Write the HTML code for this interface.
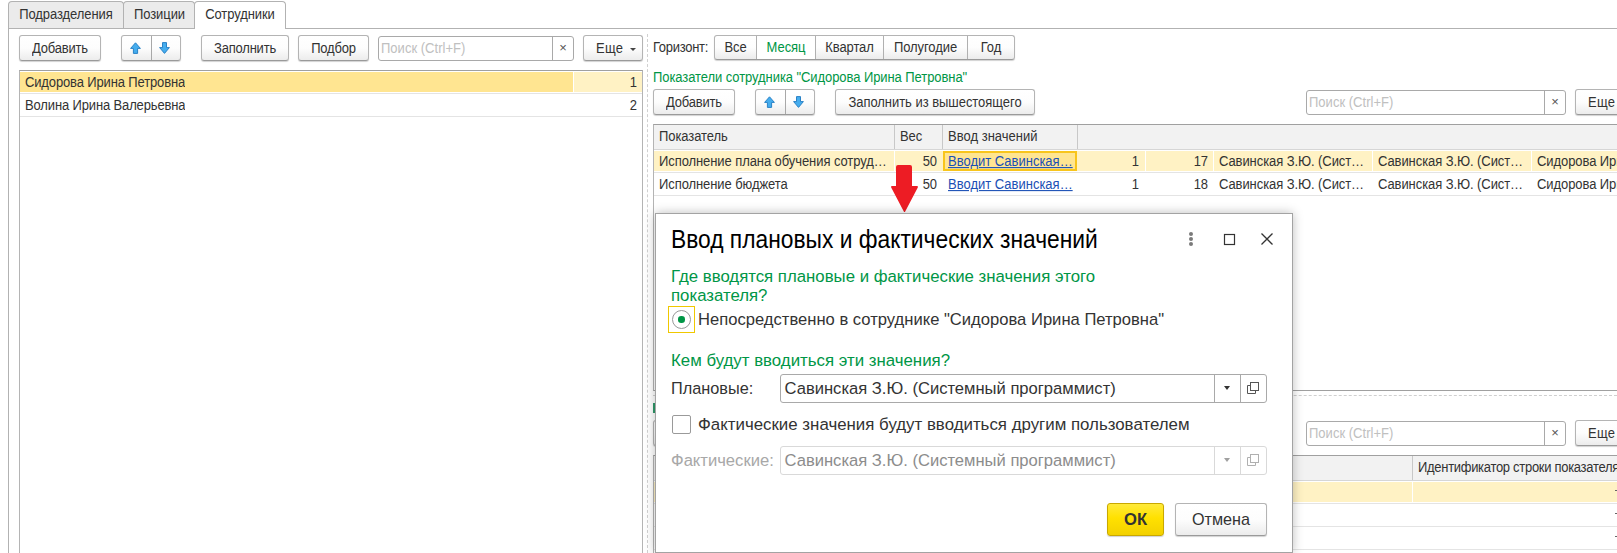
<!DOCTYPE html>
<html lang="ru">
<head>
<meta charset="utf-8">
<title>Ввод плановых и фактических значений</title>
<style>
html,body{margin:0;padding:0;}
body{width:1617px;height:553px;overflow:hidden;background:#fff;position:relative;font-family:"Liberation Sans",sans-serif;font-size:13px;color:#333;letter-spacing:-0.08px;}
.a{position:absolute;white-space:nowrap;box-sizing:border-box;}
.btn{position:absolute;box-sizing:border-box;border:1px solid #b4b4b4;border-bottom-color:#9a9a9a;border-radius:3px;background:linear-gradient(#ffffff 0%,#fdfdfd 50%,#ececec 100%);box-shadow:0 1px 1px rgba(0,0,0,.18);text-align:center;white-space:nowrap;color:#333;height:26px;line-height:25px;font-size:13px;letter-spacing:-0.2px;}
.tab{position:absolute;box-sizing:border-box;border:1px solid #b2b2b2;border-bottom:none;border-radius:4px 4px 0 0;background:#ebebeb;text-align:center;line-height:24px;color:#333;}
.inp{position:absolute;box-sizing:border-box;border:1px solid #a9a9a9;border-radius:3px;background:#fff;}
.ph{color:#c0c0c0;letter-spacing:0.02px;}
.hl{position:absolute;height:1px;background:#e4e4e4;}
.vl{position:absolute;width:1px;background:#c8c8c8;}
.g{color:#009646;}
.cell{position:absolute;white-space:nowrap;line-height:22px;height:22px;overflow:hidden;}
.r{text-align:right;}
.lnk{color:#1a4fb5;letter-spacing:0;}
.lnk .t{text-decoration:underline;}
.d{font-size:16.6px;letter-spacing:0;}
.t{display:inline-block;transform:scaleY(1.075);transform-origin:50% 70%;}
</style>
</head>
<body>

<!-- outer frame lines -->

<!-- tabs -->
<div class="tab" style="left:8px;top:1px;width:116px;height:27px;line-height:25px;"><span class="t">Подразделения</span></div>
<div class="tab" style="left:123px;top:1px;width:72px;height:27px;line-height:25px;padding-left:1px;"><span class="t">Позиции</span></div>
<div class="a" style="left:8px;top:28px;width:1609px;height:1px;background:#b2b2b2;"></div>
<div class="a" style="left:8px;top:28px;width:1px;height:525px;background:#b2b2b2;"></div>
<div class="tab" style="left:194px;top:1px;width:92px;height:28px;background:#fff;line-height:25px;"><span class="t">Сотрудники</span></div>

<!-- left toolbar -->
<div class="btn" style="left:19px;top:35px;width:82px;"><span class="t">Добавить</span></div>
<div class="btn" style="left:121px;top:35px;width:60px;"></div>
<div class="a" style="left:151px;top:36px;width:1px;height:24px;background:#a8a8a8;"></div>
<svg class="a" style="left:129px;top:42px;" width="13" height="13" viewBox="0 0 13 13"><path d="M6.5 0.8 L11.4 6.4 H8.6 V11.4 H4.4 V6.4 H1.6 Z" fill="#45adee" stroke="#2a82c6" stroke-width="1" stroke-linejoin="miter"/></svg>
<svg class="a" style="left:158px;top:42px;" width="13" height="13" viewBox="0 0 13 13"><path d="M6.5 11.4 L11.4 5.6 H8.5 V0.6 H4.5 V5.6 H1.6 Z" fill="#45adee" stroke="#2a82c6" stroke-width="1" stroke-linejoin="miter"/></svg>
<div class="btn" style="left:201px;top:35px;width:88px;"><span class="t">Заполнить</span></div>
<div class="btn" style="left:298px;top:35px;width:71px;"><span class="t">Подбор</span></div>
<div class="inp" style="left:378px;top:36px;width:196px;height:25px;"></div>
<div class="a ph" style="left:381px;top:36px;line-height:25px;"><span class="t">Поиск (Ctrl+F)</span></div>
<div class="a" style="left:552px;top:37px;width:1px;height:23px;background:#a9a9a9;"></div>
<div class="a" style="left:553px;top:36px;width:20px;line-height:24px;text-align:center;color:#555;font-size:13px;">×</div>
<div class="btn" style="left:583px;top:35px;width:60px;text-align:left;padding-left:12px;letter-spacing:0.25px;"><span class="t">Еще</span></div>
<div class="a" style="left:630px;top:48px;width:0;height:0;border-left:3px solid transparent;border-right:3px solid transparent;border-top:3px solid #444;"></div>

<!-- left list -->
<div class="a" style="left:19px;top:70px;width:624px;height:483px;border:1px solid #a0a0a0;border-bottom:none;border-left-color:#b4b4b4;border-right-color:#b4b4b4;"></div>
<div class="a" style="left:20px;top:72px;width:553px;height:20px;background:#ffe591;"></div>
<div class="a" style="left:574px;top:72px;width:68px;height:20px;background:#fff2c4;"></div>
<div class="hl" style="left:20px;top:93px;width:622px;"></div>
<div class="hl" style="left:20px;top:116px;width:622px;"></div>
<div class="cell" style="left:25px;top:72px;letter-spacing:-0.14px;"><span class="t">Сидорова Ирина Петровна</span></div>
<div class="cell r" style="left:574px;top:72px;width:63px;"><span class="t">1</span></div>
<div class="cell" style="left:25px;top:95px;letter-spacing:-0.14px;"><span class="t">Волина Ирина Валерьевна</span></div>
<div class="cell r" style="left:574px;top:95px;width:63px;"><span class="t">2</span></div>

<!-- splitter -->
<div class="a" style="left:647px;top:34px;width:0;height:519px;border-left:1px dashed #d0d0d0;"></div>

<!-- right top: horizon -->
<div class="a" style="left:653px;top:35px;line-height:26px;letter-spacing:-0.3px;"><span class="t">Горизонт:</span></div>
<div class="btn" style="left:714px;top:35px;width:301px;height:25px;"></div>
<div class="a" style="left:757px;top:36px;width:59px;height:23px;background:#fff;"></div>
<div class="a" style="left:756px;top:36px;width:1px;height:23px;background:#b0b0b0;"></div>
<div class="a" style="left:815px;top:36px;width:1px;height:23px;background:#b0b0b0;"></div>
<div class="a" style="left:883px;top:36px;width:1px;height:23px;background:#b0b0b0;"></div>
<div class="a" style="left:967px;top:36px;width:1px;height:23px;background:#b0b0b0;"></div>
<div class="a" style="left:714px;top:35px;width:43px;text-align:center;line-height:26px;"><span class="t">Все</span></div>
<div class="a g" style="left:757px;top:35px;width:58px;text-align:center;line-height:26px;"><span class="t">Месяц</span></div>
<div class="a" style="left:816px;top:35px;width:67px;text-align:center;line-height:26px;"><span class="t">Квартал</span></div>
<div class="a" style="left:884px;top:35px;width:83px;text-align:center;line-height:26px;"><span class="t">Полугодие</span></div>
<div class="a" style="left:968px;top:35px;width:46px;text-align:center;line-height:26px;"><span class="t">Год</span></div>

<div class="a g" style="left:653px;top:69px;line-height:18px;letter-spacing:-0.075px;"><span class="t">Показатели сотрудника "Сидорова Ирина Петровна"</span></div>

<div class="btn" style="left:653px;top:89px;width:82px;"><span class="t">Добавить</span></div>
<div class="btn" style="left:755px;top:89px;width:60px;"></div>
<div class="a" style="left:785px;top:90px;width:1px;height:24px;background:#a8a8a8;"></div>
<svg class="a" style="left:763px;top:96px;" width="13" height="13" viewBox="0 0 13 13"><path d="M6.5 0.8 L11.4 6.4 H8.6 V11.4 H4.4 V6.4 H1.6 Z" fill="#45adee" stroke="#2a82c6" stroke-width="1" stroke-linejoin="miter"/></svg>
<svg class="a" style="left:792px;top:96px;" width="13" height="13" viewBox="0 0 13 13"><path d="M6.5 11.4 L11.4 5.6 H8.5 V0.6 H4.5 V5.6 H1.6 Z" fill="#45adee" stroke="#2a82c6" stroke-width="1" stroke-linejoin="miter"/></svg>
<div class="btn" style="left:835px;top:89px;width:200px;letter-spacing:-0.04px;"><span class="t">Заполнить из вышестоящего</span></div>
<div class="inp" style="left:1306px;top:90px;width:260px;height:25px;"></div>
<div class="a ph" style="left:1309px;top:90px;line-height:25px;"><span class="t">Поиск (Ctrl+F)</span></div>
<div class="a" style="left:1544px;top:91px;width:1px;height:23px;background:#a9a9a9;"></div>
<div class="a" style="left:1545px;top:90px;width:20px;line-height:24px;text-align:center;color:#555;font-size:13px;">×</div>
<div class="btn" style="left:1575px;top:89px;width:60px;text-align:left;padding-left:12px;letter-spacing:0.25px;"><span class="t">Еще</span></div>

<!-- right top table -->
<div class="a" style="left:653px;top:124px;width:970px;height:267px;border:1px solid #a0a0a0;border-left-color:#b4b4b4;"></div>
<div class="a" style="left:654px;top:125px;width:963px;height:24px;background:#f2f2f2;"></div>
<div class="a" style="left:654px;top:149px;width:963px;height:1px;background:#d6d6d6;"></div>
<div class="vl" style="left:894px;top:125px;height:24px;"></div>
<div class="vl" style="left:942px;top:125px;height:24px;"></div>
<div class="vl" style="left:1077px;top:125px;height:24px;"></div>
<div class="a" style="left:659px;top:125px;line-height:23px;"><span class="t">Показатель</span></div>
<div class="a" style="left:900px;top:125px;line-height:23px;"><span class="t">Вес</span></div>
<div class="a" style="left:948px;top:125px;line-height:23px;letter-spacing:0.02px;"><span class="t">Ввод значений</span></div>

<div class="a" style="left:654px;top:151px;width:963px;height:20px;background:#fff2c4;"></div>
<div class="a" style="left:894px;top:151px;width:1px;height:20px;background:#fff;"></div>
<div class="a" style="left:1145px;top:151px;width:1px;height:20px;background:#fff;"></div>
<div class="a" style="left:1213px;top:151px;width:1px;height:20px;background:#fff;"></div>
<div class="a" style="left:1372px;top:151px;width:1px;height:20px;background:#fff;"></div>
<div class="a" style="left:1531px;top:151px;width:1px;height:20px;background:#fff;"></div>
<div class="a" style="left:943px;top:151px;width:134px;height:20px;background:#ffe591;border:2px solid #f8c51c;"></div>
<div class="hl" style="left:654px;top:172px;width:963px;"></div>
<div class="hl" style="left:654px;top:195px;width:963px;"></div>

<div class="cell" style="left:659px;top:151px;"><span class="t">Исполнение плана обучения сотруд…</span></div>
<div class="cell r" style="left:896px;top:151px;width:41px;"><span class="t">50</span></div>
<div class="cell lnk" style="left:948px;top:151px;"><span class="t">Вводит Савинская…</span></div>
<div class="cell r" style="left:1078px;top:151px;width:61px;"><span class="t">1</span></div>
<div class="cell r" style="left:1146px;top:151px;width:62px;"><span class="t">17</span></div>
<div class="cell" style="left:1219px;top:151px;"><span class="t">Савинская З.Ю. (Сист…</span></div>
<div class="cell" style="left:1378px;top:151px;"><span class="t">Савинская З.Ю. (Сист…</span></div>
<div class="cell" style="left:1537px;top:151px;"><span class="t">Сидорова Ирина Петровна</span></div>

<div class="cell" style="left:659px;top:174px;"><span class="t">Исполнение бюджета</span></div>
<div class="cell r" style="left:896px;top:174px;width:41px;"><span class="t">50</span></div>
<div class="cell lnk" style="left:948px;top:174px;"><span class="t">Вводит Савинская…</span></div>
<div class="cell r" style="left:1078px;top:174px;width:61px;"><span class="t">1</span></div>
<div class="cell r" style="left:1146px;top:174px;width:62px;"><span class="t">18</span></div>
<div class="cell" style="left:1219px;top:174px;"><span class="t">Савинская З.Ю. (Сист…</span></div>
<div class="cell" style="left:1378px;top:174px;"><span class="t">Савинская З.Ю. (Сист…</span></div>
<div class="cell" style="left:1537px;top:174px;"><span class="t">Сидорова Ирина Петровна</span></div>

<!-- right bottom area -->
<div class="a" style="left:653px;top:395px;width:964px;height:0;border-top:1px dashed #d0d0d0;"></div>
<div class="a" style="left:653px;top:403px;width:2px;height:10px;background:#2f9a6a;"></div>
<div class="btn" style="left:653px;top:420px;width:82px;"></div>
<div class="inp" style="left:1306px;top:421px;width:260px;height:25px;"></div>
<div class="a ph" style="left:1309px;top:421px;line-height:25px;"><span class="t">Поиск (Ctrl+F)</span></div>
<div class="a" style="left:1544px;top:422px;width:1px;height:23px;background:#a9a9a9;"></div>
<div class="a" style="left:1545px;top:421px;width:20px;line-height:24px;text-align:center;color:#555;font-size:13px;">×</div>
<div class="btn" style="left:1575px;top:420px;width:60px;text-align:left;padding-left:12px;letter-spacing:0.25px;"><span class="t">Еще</span></div>
<div class="a" style="left:653px;top:455px;width:970px;height:110px;border:1px solid #a0a0a0;border-left-color:#b4b4b4;"></div>
<div class="a" style="left:654px;top:456px;width:963px;height:24px;background:#f2f2f2;"></div>
<div class="a" style="left:654px;top:480px;width:963px;height:1px;background:#d6d6d6;"></div>
<div class="vl" style="left:1412px;top:456px;height:24px;"></div>
<div class="a" style="left:1418px;top:456px;line-height:23px;letter-spacing:-0.3px;"><span class="t">Идентификатор строки показателя</span></div>
<div class="a" style="left:654px;top:482px;width:963px;height:20px;background:#fff2c4;"></div>
<div class="a" style="left:1412px;top:482px;width:1px;height:20px;background:#fff;"></div>
<div class="hl" style="left:654px;top:503px;width:963px;"></div>
<div class="hl" style="left:654px;top:526px;width:963px;"></div>
<div class="hl" style="left:654px;top:549px;width:963px;"></div>
<div class="a" style="left:1615px;top:490px;width:2px;height:1px;background:#666;"></div>
<div class="a" style="left:1615px;top:513px;width:2px;height:1px;background:#666;"></div>
<div class="a" style="left:1615px;top:536px;width:2px;height:1px;background:#666;"></div>

<!-- red arrow -->
<svg class="a" style="left:888px;top:162px;" width="34" height="54" viewBox="0 0 34 54"><path d="M10 3 H22 Q24 3 24 5 V24 H29 Q30.6 24 29.8 25.6 L17.2 49.4 Q16.5 50.6 15.8 49.4 L3.2 25.6 Q2.4 24 4 24 H8 V5 Q8 3 10 3 Z" fill="#ed1c24"/></svg>

<!-- dialog -->
<div class="a" style="left:655px;top:213px;width:638px;height:340px;background:#fff;border:1px solid #a3a3a3;box-shadow:0 0 10px rgba(0,0,0,.26);"></div>
<div class="a" style="left:671px;top:226px;font-size:22.8px;line-height:28px;color:#000;letter-spacing:0;"><span style="display:inline-block;transform:scaleY(1.09);transform-origin:50% 78%;">Ввод плановых и фактических значений</span></div>

<svg class="a" style="left:1186px;top:231px;" width="10" height="17" viewBox="0 0 10 17"><circle cx="5" cy="3" r="2" fill="#7a7a7a"/><circle cx="5" cy="8" r="2" fill="#7a7a7a"/><circle cx="5" cy="13" r="2" fill="#7a7a7a"/></svg>
<svg class="a" style="left:1223px;top:233px;" width="14" height="14" viewBox="0 0 14 14"><rect x="1.5" y="1.5" width="10" height="10" fill="none" stroke="#333" stroke-width="1.2"/></svg>
<svg class="a" style="left:1259px;top:231px;" width="16" height="16" viewBox="0 0 16 16"><path d="M2.5 2.5 L13.5 13.5 M13.5 2.5 L2.5 13.5" stroke="#333" stroke-width="1.3" fill="none"/></svg>

<div class="a g d" style="left:671px;top:267px;line-height:19px;white-space:normal;width:440px;font-size:16.79px;">Где вводятся плановые и фактические значения этого показателя?</div>

<div class="a" style="left:668px;top:306px;width:27px;height:27px;border:1px solid #f0c800;"></div>
<div class="a" style="left:672px;top:310px;width:19px;height:19px;border:1px solid #999;border-radius:50%;background:#fff;"></div>
<div class="a" style="left:678.3px;top:316.3px;width:6.4px;height:6.4px;border-radius:50%;background:#009646;"></div>
<div class="a d" style="left:698px;top:310px;line-height:20px;font-size:16.6px;">Непосредственно в сотруднике "Сидорова Ирина Петровна"</div>

<div class="a g d" style="left:671px;top:351px;line-height:20px;font-size:16.83px;">Кем будут вводиться эти значения?</div>

<div class="a d" style="left:671px;top:378px;line-height:20px;font-size:16.3px;">Плановые:</div>
<div class="inp" style="left:780px;top:374px;width:487px;height:29px;"></div>
<div class="a" style="left:1214px;top:375px;width:1px;height:27px;background:#a9a9a9;"></div>
<div class="a" style="left:1240px;top:375px;width:1px;height:27px;background:#a9a9a9;"></div>
<div class="a d" style="left:784.5px;top:379px;line-height:20px;font-size:16.58px;">Савинская З.Ю. (Системный программист)</div>
<div class="a" style="left:1223.5px;top:386px;width:0;height:0;border-left:3.5px solid transparent;border-right:3.5px solid transparent;border-top:4px solid #333;"></div>
<svg class="a" style="left:1246px;top:381px;" width="14" height="14" viewBox="0 0 14 14"><path d="M4.5 4.5 H1.5 V12.5 H9.5 V9.5" fill="none" stroke="#555" stroke-width="1"/><rect x="4.5" y="1.5" width="8" height="8" fill="#fff" stroke="#555" stroke-width="1"/></svg>

<div class="a" style="left:672px;top:415px;width:19px;height:19px;border:1px solid #9a9a9a;border-radius:2px;background:#fff;"></div>
<div class="a d" style="left:698px;top:415px;line-height:20px;font-size:16.87px;">Фактические значения будут вводиться другим пользователем</div>

<div class="a d" style="left:671px;top:451px;line-height:20px;color:#a8a8a8;font-size:16.62px;">Фактические:</div>
<div class="inp" style="left:780px;top:446px;width:487px;height:29px;border-color:#d9d9d9;"></div>
<div class="a" style="left:1214px;top:447px;width:1px;height:27px;background:#d9d9d9;"></div>
<div class="a" style="left:1240px;top:447px;width:1px;height:27px;background:#d9d9d9;"></div>
<div class="a d" style="left:784.5px;top:451px;line-height:20px;color:#8c8c8c;font-size:16.58px;">Савинская З.Ю. (Системный программист)</div>
<div class="a" style="left:1223.5px;top:458px;width:0;height:0;border-left:3.5px solid transparent;border-right:3.5px solid transparent;border-top:4px solid #a0a0a0;"></div>
<svg class="a" style="left:1246px;top:453px;" width="14" height="14" viewBox="0 0 14 14"><path d="M4.5 4.5 H1.5 V12.5 H9.5 V9.5" fill="none" stroke="#b0b0b0" stroke-width="1"/><rect x="4.5" y="1.5" width="8" height="8" fill="#fff" stroke="#b0b0b0" stroke-width="1"/></svg>

<div class="btn d" style="left:1107px;top:503px;width:57px;height:33px;line-height:31px;font-weight:bold;background:linear-gradient(#ffea3a 0%,#ffe100 45%,#f3d100 100%);border-color:#c9a800;color:#333;">ОК</div>
<div class="btn d" style="left:1175px;top:503px;width:92px;height:33px;line-height:31px;font-size:16.2px;">Отмена</div>

</body>
</html>
